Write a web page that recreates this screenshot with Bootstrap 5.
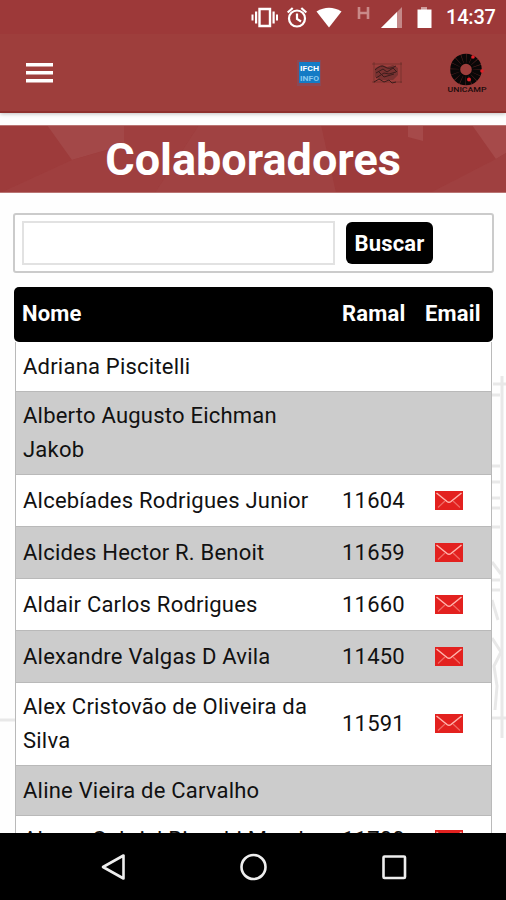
<!DOCTYPE html>
<html lang="pt-BR">
<head>
<meta charset="utf-8">
<meta name="viewport" content="width=device-width, initial-scale=1">
<title>Colaboradores</title>
<link href="https://cdn.jsdelivr.net/npm/bootstrap@5.3.0/dist/css/bootstrap.min.css" rel="stylesheet">
<style>
  body { font-family: Roboto, "Liberation Sans", sans-serif; color: #111; }
  .screen { width: 506px; height: 900px; background: #fefefe; }
  .app-top { height: 113px; background: #9e3e3c; border-bottom: 2px solid #8e302d; box-shadow: 0 1px 4px rgba(0,0,0,.25); }
  .status-line { height: 34px; background: #9d3939; padding-right: 10px; }
  .clock { width: 50px; margin-left: 11px; font-size: 20px; font-weight: 500; line-height: 38px; letter-spacing: -.2px; white-space: nowrap; }
  .tool-line { height: 77px; padding: 0 18px 0 26px; }
  .gap-info { margin-right: 50px; }
  .gap-photo { margin-right: 43px; }
  .title-band { height: 68px; margin-top: 12px; }
  .title-band h1 { font-size: 45px; font-weight: 700; line-height: 70px; }
  .search-box { margin: 20px 12px 0 13px; height: 60px; border: 2px solid #cbcbcb; border-radius: 3px; background: #fff; padding: 0 7px 1px; }
  .search-box .form-control { width: 313px; height: 44px; border: 2px solid #e2e2e2; }
  .search-box .btn { width: 87px; height: 42px; margin-left: 11px; font-size: 22px; font-weight: 700; line-height: 43px; letter-spacing: .15px; background: #000; border-radius: 6px; }
  .people { width: 479px; margin: 14px 0 0 14px; }
  .people-head { height: 55px; background: #000; border-radius: 5px; font-size: 22px; font-weight: 700; letter-spacing: .2px; padding: 0 0 2px 8px; }
  .person { height: 52px; font-size: 22px; line-height: 34px; letter-spacing: .22px; margin: 0 1px; padding-left: 7px; background: #fff; border: 1px solid #b9b9b9; border-top-width: 0; }
  .person:nth-child(odd) { background: #ccc; }
  .person.short { height: 50px; }
  .person.tall { height: 83px; }
  .person.last { height: 48px; }
  .person svg { margin: 0 0 1px 1px; }
  .col-name { width: 320px; }
  .col-ext { width: 83px; }
  .person .col-ext { width: 92px; }
  .person .col-name { width: 319px; }
  .soft-nav { height: 67px; background: #000; }
  .paper { top: 370px; }
</style>
</head>
<body>
<svg class="d-none">
  <symbol id="mail" viewBox="0 0 28 19"><path fill="#e3211f" d="M0 0h28v19H0z"/><path d="M1.500 2l10.500 8.500q2 1.500 4 0L26.500 2" fill="none" stroke="#ffb5ae" stroke-width="1.500"/><path d="M3 16.500l7-6.500M25 16.500L18 10" fill="none" stroke="#f06a64" stroke-width="1.200"/></symbol>
</svg>
<main class="screen position-relative overflow-hidden d-flex flex-column">
  <svg class="position-absolute start-0 paper" width="506" height="380" fill="none" stroke="#e8e8e8" stroke-width="3">
    <path d="M0 350H16M493 14h13M502 6V368M492 25h8M492 96h8M492 112h8M492 128h8M492 138h8M492 157h8M492 348h14"/>
    <path d="M492 192l9 12M492 210h8M492 220h8M492 230l6 20M492 268l9 14-7 14 3 20-2 24"/>
  </svg>

  <header class="app-top flex-shrink-0 text-white position-relative">
    <div class="status-line d-flex align-items-center justify-content-end">
      <svg width="185" height="34" fill="#fff">
        <path d="M9.500 9h10.500v17H9.500z" fill="none" stroke="#fff" stroke-width="2.400"/>
        <path d="M5 11.500h2.200v12H5zM1.500 14.500h2v6h-2zM22.500 11.500h2.200v12h-2.200zM26 14.500h2v6h-2z"/>
        <g fill="none" stroke="#fff" stroke-width="2.200"><circle cx="47" cy="18.500" r="8"/><path d="M47 13.500V19l4 2.500M37.700 12.500l5-4.500M56.300 12.500l-5-4.500"/></g>
        <path d="M66.500 11.500Q79 4 91.500 11.500L79 27.500z"/>
        <path d="M109 7v12M118 7v12M109 13h9" stroke="#c98988" stroke-width="2.600"/>
        <path d="M131 28L152 7v21z" opacity=".4"/><path d="M131 28l16-16v16z"/>
        <path d="M171 7h6v3h-6z" opacity=".5"/><path d="M167.500 9.500h14V28h-14z"/>
      </svg>
      <span class="clock">14:37</span>
    </div>
    <div class="tool-line d-flex align-items-center">
      <svg class="me-auto" width="27" height="20" fill="#fff"><path d="M0 0h27v3.500H0zM0 8h27v3.500H0zM0 16h27v3.500H0z"/></svg>
      <svg class="gap-info" width="24" height="26" font-weight="700" font-size="7.500" text-anchor="middle">
        <path d="M0 0h24v26H0z" fill="#70577b" opacity=".4"/><path d="M2 2h21v21H2z" fill="#147bc5"/>
        <text x="12.500" y="11" fill="#fff" textLength="19" lengthAdjust="spacingAndGlyphs">IFCH</text>
        <text x="12.500" y="21" fill="#87c8ef" textLength="19" lengthAdjust="spacingAndGlyphs">INFO</text>
      </svg>
      <svg class="gap-photo" width="32" height="24" fill="none" stroke="#3b1c1b">
        <path d="M1 3h30M3 1v21M30 1v21M1 21h30" stroke-width=".5" opacity=".7"/>
        <path d="M4 7l7-3 5 2 6-2 5 3v7l-5 5H10l-6-3z" fill="#542625" opacity=".5" stroke="none"/>
        <path d="M4 9q6-6 10-3t11-1M5 12l7-4 4 3 6-4 4 4M5 17l8-5 5 1 7-2M7 10l6 6 10-3M3 21l5-3 5 3 5-2 3 3 4-1" stroke-width="1"/>
      </svg>
      <svg width="42" height="42">
        <circle cx="20" cy="17.500" r="10.800" fill="none" stroke="#090707" stroke-width="10"/>
        <circle cx="20" cy="17.500" r="11.500" fill="none" stroke="#9e3e3c" stroke-width="9" stroke-dasharray=".5 4.016" opacity=".5"/>
        <g fill="#e22028"><circle cx="27" cy="5" r="1.800"/><circle cx="36" cy="19" r="1.800"/><circle cx="23" cy="27.500" r="2"/></g>
        <text x="21" y="39.500" text-anchor="middle" font-size="6.800" font-weight="500" fill="#1b0c0c" textLength="39" lengthAdjust="spacingAndGlyphs">UNICAMP</text>
      </svg>
    </div>
  </header>

  <section class="title-band flex-shrink-0 position-relative">
    <svg class="position-absolute top-0 start-0" width="506" height="68">
      <path fill="#9d3b3b" d="M0 0h506v68H0z"/>
      <path fill="#a34848" d="M47 0h77v20L72 35z"/><path fill="#9f3f3f" d="M124 0h75l-44 68H0l72-33 52-15z"/>
      <path fill="#a44a4a" d="M199 0h122l15 68H155z" opacity=".5"/>
      <path fill="#a64a4a" d="M408 0h15v16l-15-4zM472 0h34v28l-10 6z"/>
      <path fill="#9f4040" d="M430 68l66-34 10-6v40z"/>
      <path stroke="#b97473" d="M0 .5h506M0 67.500h506"/>
    </svg>
    <h1 class="position-relative text-white text-center m-0">Colaboradores</h1>
  </section>

  <form class="search-box flex-shrink-0 d-flex align-items-center">
    <input class="form-control rounded-0 p-0" type="text" aria-label="Nome">
    <button class="btn text-white p-0 border-0" type="button">Buscar</button>
  </form>

  <section class="people flex-shrink-0 position-relative">
    <div class="people-head text-white d-flex align-items-center"><div class="col-name">Nome</div><div class="col-ext">Ramal</div><div>Email</div></div>
    <div class="person short d-flex align-items-center"><div class="col-name">Adriana Piscitelli</div></div>
    <div class="person tall d-flex align-items-center"><div class="col-name">Alberto Augusto Eichman<br>Jakob</div></div>
    <div class="person d-flex align-items-center"><div class="col-name">Alcebíades Rodrigues Junior</div><div class="col-ext">11604</div><svg width="28" height="19"><use href="#mail"/></svg></div>
    <div class="person d-flex align-items-center"><div class="col-name">Alcides Hector R. Benoit</div><div class="col-ext">11659</div><svg width="28" height="19"><use href="#mail"/></svg></div>
    <div class="person d-flex align-items-center"><div class="col-name">Aldair Carlos Rodrigues</div><div class="col-ext">11660</div><svg width="28" height="19"><use href="#mail"/></svg></div>
    <div class="person d-flex align-items-center"><div class="col-name">Alexandre Valgas D Avila</div><div class="col-ext">11450</div><svg width="28" height="19"><use href="#mail"/></svg></div>
    <div class="person tall d-flex align-items-center"><div class="col-name">Alex Cristovão de Oliveira da<br>Silva</div><div class="col-ext">11591</div><svg width="28" height="19"><use href="#mail"/></svg></div>
    <div class="person short d-flex align-items-center"><div class="col-name">Aline Vieira de Carvalho</div></div>
    <div class="person last d-flex align-items-center"><div class="col-name">Alvaro Gabriel Bianchi Mendes</div><div class="col-ext">11700</div><svg width="28" height="19"><use href="#mail"/></svg></div>
  </section>

  <nav class="soft-nav position-absolute bottom-0 start-0 w-100">
    <svg width="506" height="67" fill="none" stroke="#eee" stroke-width="2.600">
      <path d="M123.500 22.500v23L103 34z" stroke-linejoin="round"/><circle cx="253.500" cy="34" r="12"/><rect x="383.500" y="23.500" width="21.500" height="21.500" rx="1"/>
    </svg>
  </nav>
</main>
<script src="https://cdn.jsdelivr.net/npm/bootstrap@5.3.0/dist/js/bootstrap.bundle.min.js"></script>
</body>
</html>
